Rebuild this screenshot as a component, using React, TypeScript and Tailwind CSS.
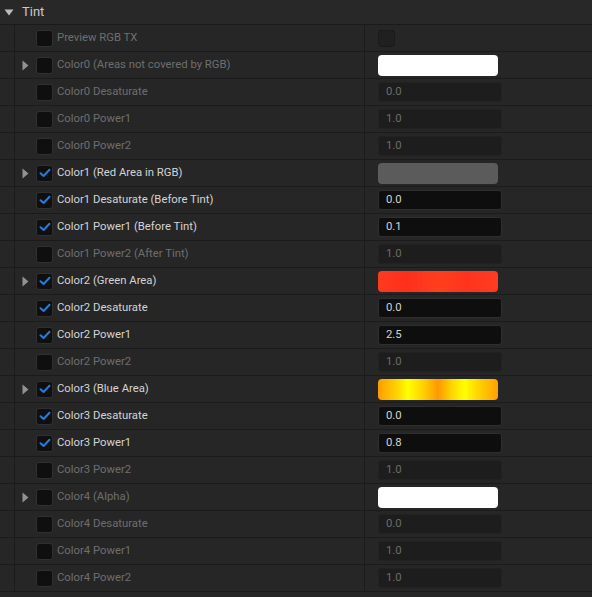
import React from 'react';

type Value =
  | { kind: 'check' }
  | { kind: 'swatch'; bg: string }
  | { kind: 'num'; value: string };

type Row = {
  label: string;
  arrow?: boolean;
  checked?: boolean;
  value: Value;
};

const rows: Row[] = [
  { label: 'Preview RGB TX', value: { kind: 'check' } },
  { label: 'Color0 (Areas not covered by RGB)', arrow: true, value: { kind: 'swatch', bg: 'bg-white' } },
  { label: 'Color0 Desaturate', value: { kind: 'num', value: '0.0' } },
  { label: 'Color0 Power1', value: { kind: 'num', value: '1.0' } },
  { label: 'Color0 Power2', value: { kind: 'num', value: '1.0' } },
  { label: 'Color1 (Red Area in RGB)', arrow: true, checked: true, value: { kind: 'swatch', bg: 'bg-[#5b5b5b]' } },
  { label: 'Color1 Desaturate (Before Tint)', checked: true, value: { kind: 'num', value: '0.0' } },
  { label: 'Color1 Power1 (Before Tint)', checked: true, value: { kind: 'num', value: '0.1' } },
  { label: 'Color1 Power2 (After Tint)', value: { kind: 'num', value: '1.0' } },
  {
    label: 'Color2 (Green Area)',
    arrow: true,
    checked: true,
    value: { kind: 'swatch', bg: 'bg-[linear-gradient(90deg,#ff3a1e,#ff2f1c_25%,#ff401f_50%,#ff331d_75%,#ff3d20)]' },
  },
  { label: 'Color2 Desaturate', checked: true, value: { kind: 'num', value: '0.0' } },
  { label: 'Color2 Power1', checked: true, value: { kind: 'num', value: '2.5' } },
  { label: 'Color2 Power2', value: { kind: 'num', value: '1.0' } },
  {
    label: 'Color3 (Blue Area)',
    arrow: true,
    checked: true,
    value: {
      kind: 'swatch',
      bg: 'bg-[linear-gradient(90deg,#ff9c00,#ffd000_15%,#ffff00_25%,#ffd000_38%,#ff9800_50%,#ffd800_62%,#ffff00_72%,#ffd000_85%,#ffa000)]',
    },
  },
  { label: 'Color3 Desaturate', checked: true, value: { kind: 'num', value: '0.0' } },
  { label: 'Color3 Power1', checked: true, value: { kind: 'num', value: '0.8' } },
  { label: 'Color3 Power2', value: { kind: 'num', value: '1.0' } },
  { label: 'Color4 (Alpha)', arrow: true, value: { kind: 'swatch', bg: 'bg-white' } },
  { label: 'Color4 Desaturate', value: { kind: 'num', value: '0.0' } },
  { label: 'Color4 Power1', value: { kind: 'num', value: '1.0' } },
  { label: 'Color4 Power2', value: { kind: 'num', value: '1.0' } },
];

const Checkbox: React.FC<{ checked?: boolean }> = ({ checked }) => (
  <div className="w-[17px] h-[17px] rounded-[3px] bg-[#0f0f0f] border border-[#303030] flex items-center justify-center shrink-0">
    {checked && (
      <svg width="12" height="10" viewBox="0 0 12 10">
        <path d="M1.5 5.2 L4.6 8 L10.5 1.8" fill="none" stroke="#1f7ee0" strokeWidth="2" strokeLinecap="round" strokeLinejoin="round" />
      </svg>
    )}
  </div>
);

const ValueCell: React.FC<{ v: Value; enabled: boolean }> = ({ v, enabled }) => {
  if (v.kind === 'check') {
    return <div className="w-[17px] h-[17px] rounded-[3px] bg-[#202020] border border-[#1a1a1a]" />;
  }
  if (v.kind === 'swatch') {
    return <div className={`w-[120px] h-[21px] rounded-[4px] ${v.bg}`} />;
  }
  return (
    <div
      className={
        enabled
          ? 'w-[124px] h-[20px] rounded-[3px] bg-[#0e0e0e] border border-[#2e2e2e] flex items-center pl-[7px] text-[11.3px] text-[#d4d4d4]'
          : 'w-[124px] h-[20px] rounded-[3px] bg-[#1d1d1d] border border-[#222222] flex items-center pl-[7px] text-[11.3px] text-[#6c6c6c]'
      }
    >
      {v.value}
    </div>
  );
};

const App: React.FC = () => {
  return (
    <div className="w-[592px] h-[597px] bg-[#262626] overflow-hidden font-['Roboto',sans-serif] select-none">
      {/* Category header */}
      <div className="h-[25px] bg-[#282828] border-b border-[#1b1b1b] flex items-center">
        <svg width="10" height="7" viewBox="0 0 10 7" className="ml-[4px] mt-[1px]">
          <path d="M0.5 0.5 L9.5 0.5 L5 6.5 Z" fill="#bcbcbc" />
        </svg>
        <span className="ml-[8px] text-[13px] text-[#c8c8c8]">Tint</span>
      </div>

      {rows.map((r) => {
        const enabled = !!r.checked;
        return (
          <div key={r.label} className="h-[27px] flex border-b border-[#1b1b1b]">
            <div className="w-[15px] border-r border-[#1b1b1b] shrink-0" />
            <div className="w-[350px] border-r border-[#1b1b1b] flex items-center pl-[7px] shrink-0">
              <div className="w-[14px] flex items-center">
                {r.arrow && (
                  <svg width="7" height="11" viewBox="0 0 7 11">
                    <path d="M0.5 0.5 L6.5 5.5 L0.5 10.5 Z" fill="#929292" />
                  </svg>
                )}
              </div>
              <Checkbox checked={r.checked} />
              <span className={`ml-[4px] text-[11.3px] whitespace-nowrap ${enabled ? 'text-[#d4d4d4]' : 'text-[#6e6e6e]'}`}>
                {r.label}
              </span>
            </div>
            <div className="flex-1 flex items-center pl-[13px]">
              <ValueCell v={r.value} enabled={enabled} />
            </div>
          </div>
        );
      })}
    </div>
  );
};

export default App;
